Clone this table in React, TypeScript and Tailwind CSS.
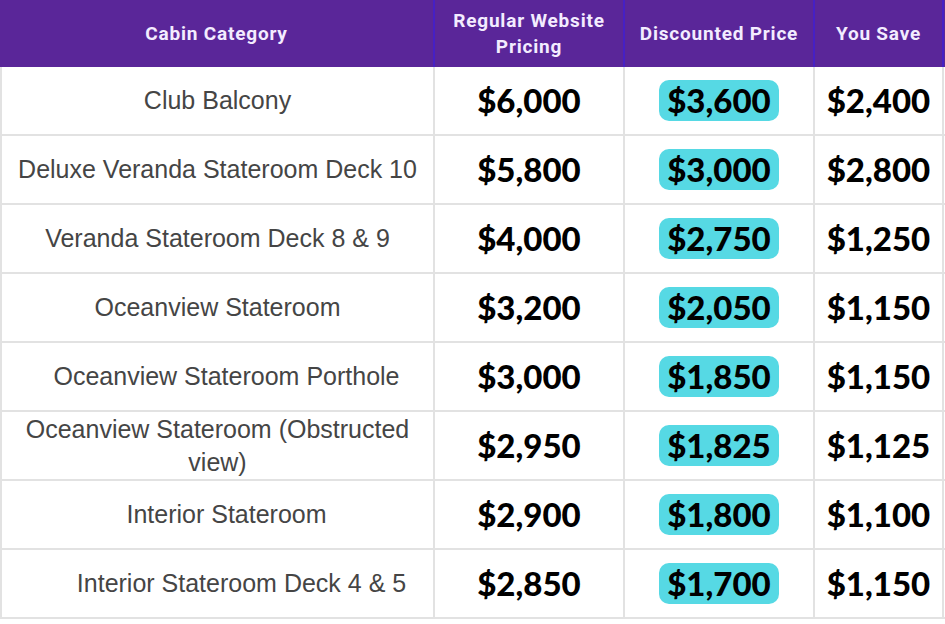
const rows = [
  { name: 'Club Balcony', regular: '$6,000', discounted: '$3,600', save: '$2,400', pad: 'px-3' },
  { name: 'Deluxe Veranda Stateroom Deck 10', regular: '$5,800', discounted: '$3,000', save: '$2,800', pad: 'px-3' },
  { name: 'Veranda Stateroom Deck 8 & 9', regular: '$4,000', discounted: '$2,750', save: '$1,250', pad: 'px-3' },
  { name: 'Oceanview Stateroom', regular: '$3,200', discounted: '$2,050', save: '$1,150', pad: 'px-3' },
  { name: 'Oceanview Stateroom Porthole', regular: '$3,000', discounted: '$1,850', save: '$1,150', pad: 'pl-[30px] pr-3' },
  { name: 'Oceanview Stateroom (Obstructed view)', regular: '$2,950', discounted: '$1,825', save: '$1,125', pad: 'px-3' },
  { name: 'Interior Stateroom', regular: '$2,900', discounted: '$1,800', save: '$1,100', pad: 'pl-[30px] pr-3' },
  { name: 'Interior Stateroom Deck 4 & 5', regular: '$2,850', discounted: '$1,700', save: '$1,150', pad: 'pl-[60px] pr-3' },
];

const cols = 'grid grid-cols-[435px_190px_190px_129px_1fr]';
const price = "font-['Lato',sans-serif] font-black text-[33px] leading-none text-black";

export default function App() {
  return (
    <div className="w-[945px] h-[624px] overflow-hidden bg-white">
      <div className={`${cols} h-[67px] bg-[#5a2699] font-['Roboto',sans-serif] font-bold text-[19px] tracking-[0.8px] leading-[26px] text-[#f3ecff]`}>
        <div className="flex items-center justify-center border-r-2 border-[#4620c4] px-3 text-center">Cabin Category</div>
        <div className="flex items-center justify-center border-r-2 border-[#4620c4] px-2 text-center">Regular Website Pricing</div>
        <div className="flex items-center justify-center border-r-2 border-[#4620c4] text-center">Discounted Price</div>
        <div className="flex items-center justify-center border-r-2 border-[#4620c4] text-center">You Save</div>
        <div />
      </div>
      {rows.map((r) => (
        <div key={r.name} className={`${cols} h-[69px]`}>
          <div className={`flex items-center justify-center border-b-2 border-l-2 border-r-2 border-[#e2e2e2] ${r.pad} text-center font-['Liberation_Sans',Arial,sans-serif] text-[25px] leading-[33px] text-[#454545]`}>
            {r.name}
          </div>
          <div className={`flex items-center justify-center border-b-2 border-r-2 border-[#e2e2e2] ${price}`}>
            {r.regular}
          </div>
          <div className="flex items-center justify-center border-b-2 border-r-2 border-[#e2e2e2]">
            <span className={`rounded-[10px] bg-[#56d9e4] px-2 py-[4px] ${price}`}>{r.discounted}</span>
          </div>
          <div className={`flex items-center justify-center border-b-2 border-r-2 border-[#e2e2e2] ${price}`}>
            {r.save}
          </div>
          <div className="border-b-2 border-[#e2e2e2]" />
        </div>
      ))}
    </div>
  );
}
